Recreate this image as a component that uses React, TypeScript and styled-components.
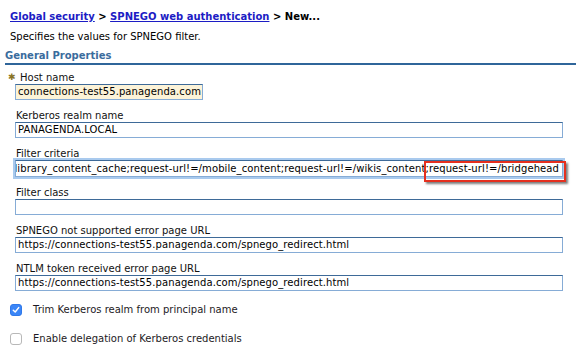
import * as React from "react"
import styled, { createGlobalStyle } from "styled-components"

const GlobalStyle = createGlobalStyle`
  html, body {
    margin: 0;
    padding: 0;
    background: #ffffff;
  }
  body {
    font-family: "DejaVu Sans", Verdana, sans-serif;
    font-size: 10px;
    color: #000000;
  }
`

const Page = styled.div`
  width: 576px;
  height: 354px;
  overflow: hidden;
  padding-top: 10px;
  box-sizing: border-box;
`

const Breadcrumb = styled.div`
  padding-left: 10px;
  line-height: 14px;
  font-weight: bold;
  white-space: nowrap;
`

const Crumb = styled.a`
  color: #1c1cc4;
  text-decoration: underline;
`

const Description = styled.p`
  margin: 6px 0 0;
  padding-left: 10px;
  line-height: 14px;
`

const SectionTitle = styled.h2`
  margin: 5px 0 0 5px;
  font-size: 10px;
  line-height: 14px;
  font-weight: bold;
  color: #3a6c9d;
  border-bottom: 2px solid #2f659a;
`

const Fields = styled.div`
  display: flex;
  flex-direction: column;
  gap: 9px;
  margin-top: 6px;
  padding-left: 15px;
`

const Field = styled.div`
  display: flex;
  flex-direction: column;
  align-items: flex-start;
  position: relative;
`

const Label = styled.label<{ $required?: boolean }>`
  line-height: 13px;
  color: #111111;
  padding-left: ${({ $required }) => ($required ? "5px" : "1px")};
  position: relative;
`

const Star = styled.span`
  position: absolute;
  left: -7px;
  top: 0;
  color: #8a7424;
  font-size: 9px;
`

// text box look-alike: a div so long values can be clipped from either side
const ValueBox = styled.div<{ $width?: number; $tinted?: boolean; $focused?: boolean }>`
  box-sizing: border-box;
  display: flex;
  align-items: center;
  justify-content: ${({ $focused }) => ($focused ? "flex-end" : "flex-start")};
  width: ${({ $width }) => ($width ? `${$width}px` : "548px")};
  height: ${({ $focused }) => ($focused ? "17px" : "16px")};
  padding: 0 3px 0 2px;
  overflow: hidden;
  white-space: nowrap;
  line-height: 14px;
  letter-spacing: 0.1px;
  color: #000000;
  background: ${({ $tinted }) => ($tinted ? "#fcf3d8" : "#ffffff")};
  border: 1px solid #86acd6;
  border-top-color: #3e6a98;
  box-shadow: ${({ $focused }) => ($focused ? "0 0 0 2px #a9caee" : "none")};
`

const Value = styled.span`
  flex: none;
`

const Highlight = styled.div`
  position: absolute;
  left: 409px;
  top: 14px;
  width: 142px;
  height: 21px;
  box-sizing: border-box;
  border: 2px solid #e5301f;
  box-shadow: 2px 2px 2px rgba(40, 40, 40, 0.6);
  pointer-events: none;
`

const Checks = styled.div`
  margin-top: 4px;
  padding-left: 10px;
`

const CheckRow = styled.label`
  display: flex;
  align-items: center;
  height: 29px;
  gap: 11px;
  color: #1d1a24;
`

const Box = styled.span<{ $checked: boolean }>`
  width: 12px;
  height: 12px;
  box-sizing: border-box;
  border-radius: 3px;
  display: flex;
  align-items: center;
  justify-content: center;
  background: ${({ $checked }) => ($checked ? "#3b86f7" : "#ffffff")};
  border: 1px solid ${({ $checked }) => ($checked ? "#3079ea" : "#b8b8b8")};
`

const CheckBox = ({ checked }: { checked: boolean }) => (
  <Box $checked={checked}>
    {checked && (
      <svg width="8" height="8" viewBox="0 0 8 8">
        <path d="M1.3 4.2 L3.2 6 L6.7 1.6" fill="none" stroke="#ffffff" strokeWidth="1.5" strokeLinecap="round" strokeLinejoin="round" />
      </svg>
    )}
  </Box>
)

const FILTER =
  "request-url!=/library_content_cache;request-url!=/mobile_content;request-url!=/wikis_content;request-url!=/bridgehead"
const REDIRECT = "https://connections-test55.panagenda.com/spnego_redirect.html"

type TextFieldProps = {
  label: string
  value: string
  required?: boolean
  width?: number
  tinted?: boolean
  focused?: boolean
  children?: React.ReactNode
}

const TextField = ({ label, value, required, width, tinted, focused, children }: TextFieldProps) => (
  <Field>
    <Label $required={required}>
      {required && <Star>✱</Star>}
      {label}
    </Label>
    <ValueBox role="textbox" $width={width} $tinted={tinted} $focused={focused}>
      <Value>{value}</Value>
    </ValueBox>
    {children}
  </Field>
)

export default function App() {
  return (
    <>
      <GlobalStyle />
      <Page>
        <Breadcrumb>
          <Crumb>Global security</Crumb> &gt; <Crumb>SPNEGO web authentication</Crumb> &gt; New...
        </Breadcrumb>
        <Description>Specifies the values for SPNEGO filter.</Description>
        <SectionTitle>General Properties</SectionTitle>
        <Fields>
          <TextField label="Host name" required width={188} tinted value="connections-test55.panagenda.com" />
          <TextField label="Kerberos realm name" value="PANAGENDA.LOCAL" />
          <TextField label="Filter criteria" focused value={FILTER}>
            <Highlight />
          </TextField>
          <TextField label="Filter class" value="" />
          <TextField label="SPNEGO not supported error page URL" value={REDIRECT} />
          <TextField label="NTLM token received error page URL" value={REDIRECT} />
        </Fields>
        <Checks>
          <CheckRow>
            <CheckBox checked />
            Trim Kerberos realm from principal name
          </CheckRow>
          <CheckRow>
            <CheckBox checked={false} />
            Enable delegation of Kerberos credentials
          </CheckRow>
        </Checks>
      </Page>
    </>
  )
}
